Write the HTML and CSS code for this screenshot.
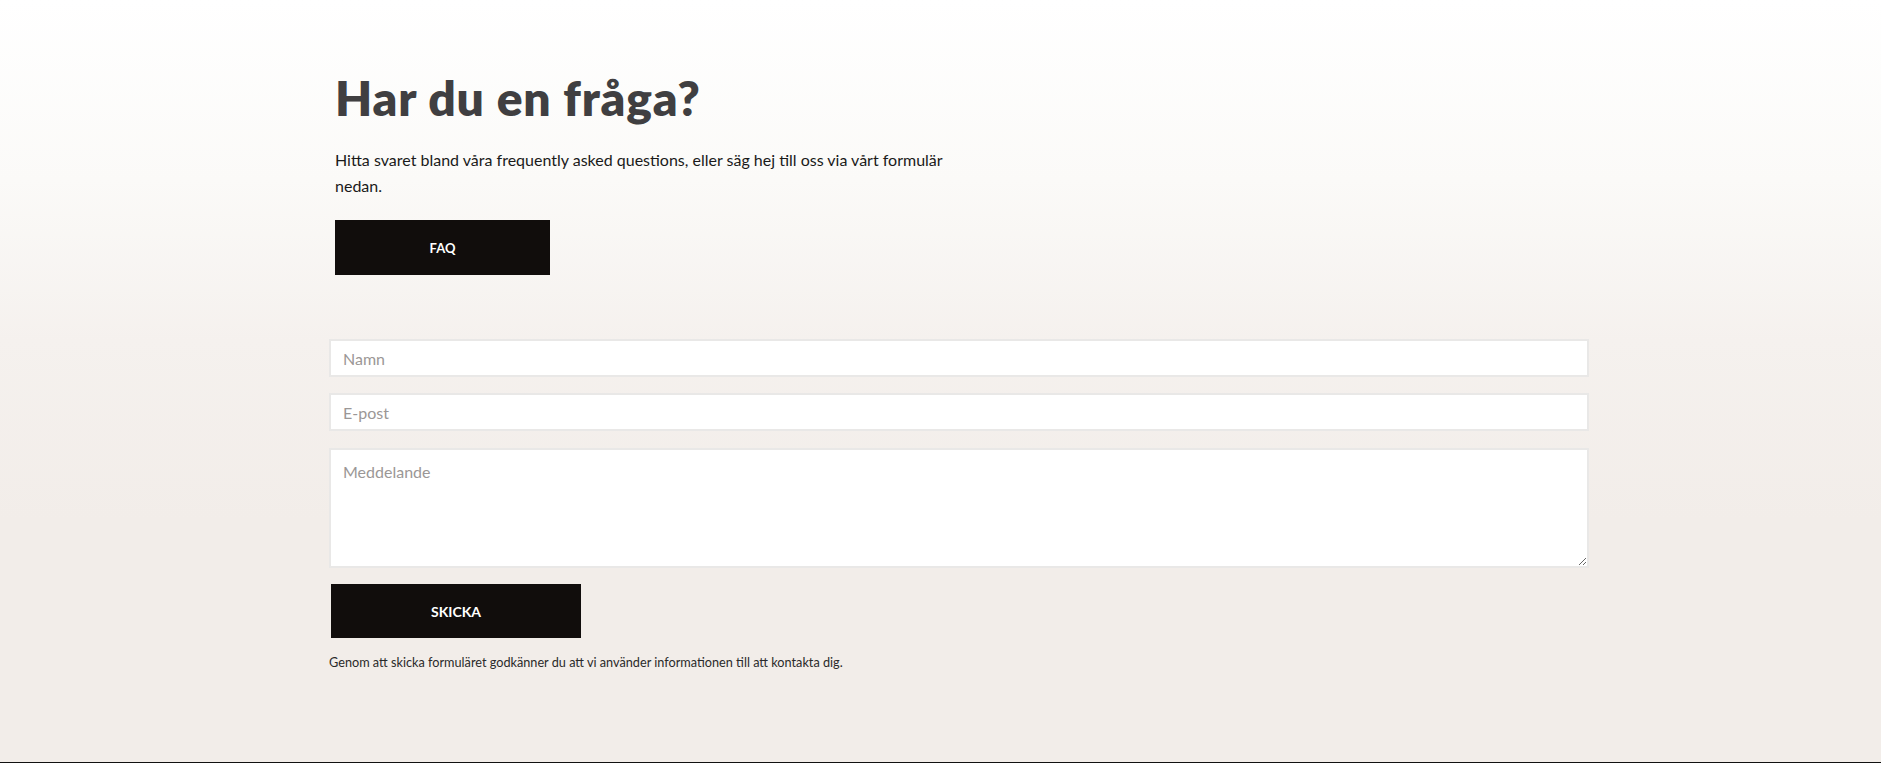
FILE: index.html
```html
<!DOCTYPE html>
<html lang="sv">
<head>
<meta charset="utf-8">
<title>Har du en fråga?</title>
<link rel="stylesheet" href="styles.css">
</head>
<body>
<div class="page">
  <main class="contact">
    <section class="intro">
      <h1 class="intro-title">Har du en fråga?</h1>
      <p class="intro-text">Hitta svaret bland våra frequently asked questions, eller säg hej till oss via vårt formulär nedan.</p>
      <a class="btn btn-faq" href="#">FAQ</a>
    </section>
    <form class="form">
      <input class="field" type="text" placeholder="Namn">
      <input class="field" type="email" placeholder="E-post">
      <textarea class="field field-area" placeholder="Meddelande"></textarea>
      <button class="btn btn-submit" type="button">SKICKA</button>
      <p class="disclaimer">Genom att skicka formuläret godkänner du att vi använder informationen till att kontakta dig.</p>
    </form>
  </main>
</div>
</body>
</html>
```

FILE: styles.css
```css
* { box-sizing: border-box; }

html, body {
  margin: 0;
  padding: 0;
}

body {
  font-family: "Lato", "Noto Sans", sans-serif;
  color: #1e1e1e;
  background: #f2ede9;
}

.page {
  height: 763px;
  background: linear-gradient(to bottom, #ffffff 0px, #fbfaf8 180px, #f5f1ee 340px, #f2ede9 520px, #f2ede9 100%);
  border-bottom: 1px solid #111;
  overflow: hidden;
}

.contact {
  width: 1260px;
  margin-left: 329px;
  padding-top: 70px;
}

.intro {
  padding-left: 6px;
  display: flex;
  flex-direction: column;
  align-items: flex-start;
}

.intro-title {
  margin: 0;
  font-size: 48px;
  line-height: 56px;
  font-weight: 800;
  color: #403f41;
  letter-spacing: 0.8px;
}

.intro-text {
  margin: 21px 0 0;
  max-width: 630px;
  font-size: 16px;
  line-height: 26px;
  color: #1a1a1a;
}

.btn {
  display: flex;
  align-items: center;
  justify-content: center;
  background: #110d0c;
  color: #ffffff;
  font-family: "Lato", "Noto Sans", sans-serif;
  font-weight: 700;
  text-decoration: none;
  border: none;
  cursor: pointer;
}

.btn-faq {
  margin-top: 21px;
  width: 215px;
  height: 55px;
  font-size: 13px;
}

.form {
  margin-top: 64px;
  display: flex;
  flex-direction: column;
  align-items: flex-start;
}

.field {
  display: block;
  width: 100%;
  height: 38px;
  margin: 0 0 16px;
  padding: 0 12px;
  border: 2px solid #e9e8e7;
  background: #ffffff;
  font-family: "Lato", "Noto Sans", sans-serif;
  font-size: 16px;
  color: #333;
  outline: none;
}

.field::placeholder {
  color: #9b9796;
}

.field-area {
  height: 120px;
  padding: 12px 12px;
  margin-top: 1px;
  margin-bottom: 16px;
  resize: both;
}

.btn-submit {
  width: 250px;
  height: 54px;
  margin-left: 2px;
  font-size: 14px;
}

.disclaimer {
  margin: 16px 0 0;
  font-size: 12.7px;
  line-height: 16px;
  color: #2a2a2a;
}
```
